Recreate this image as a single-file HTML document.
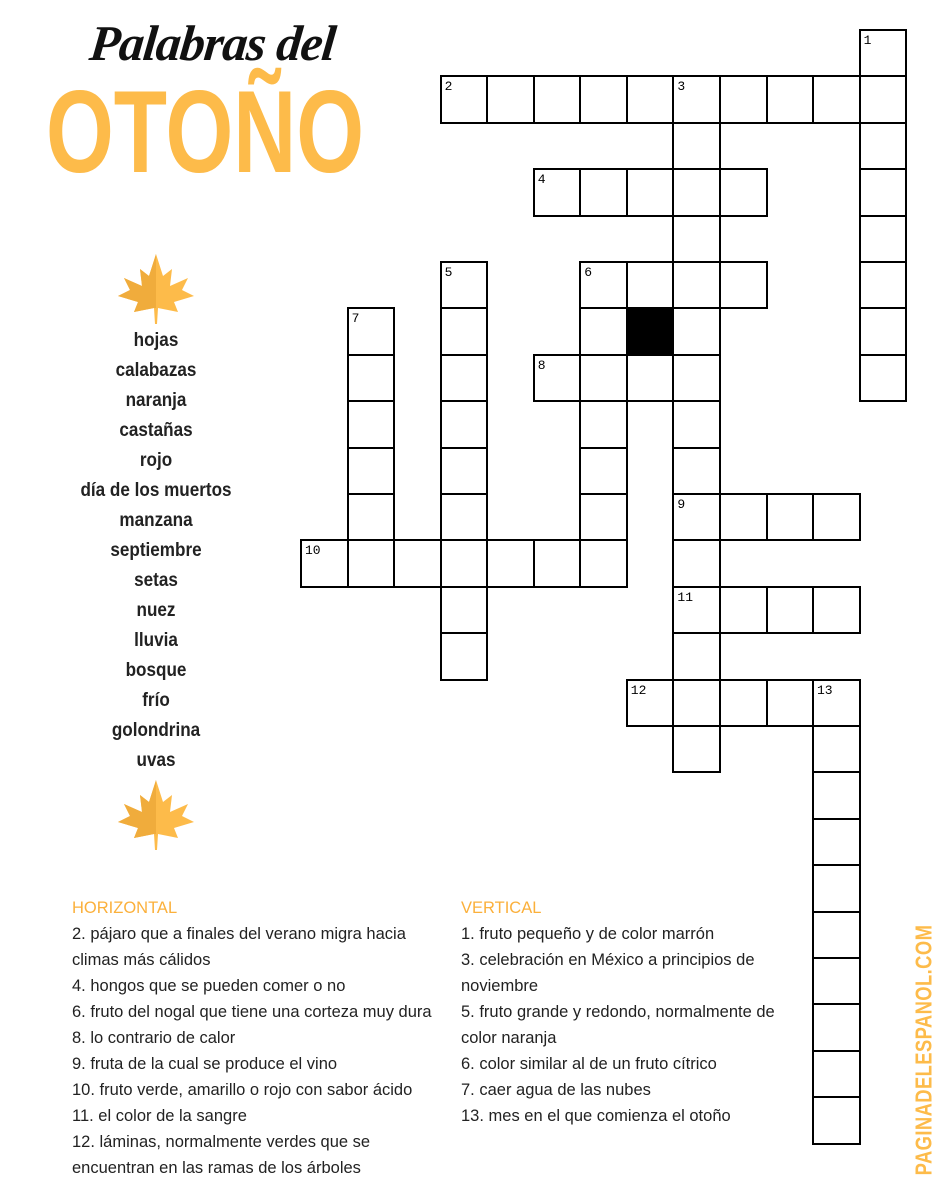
<!DOCTYPE html>
<html><head><meta charset="utf-8"><style>
body{margin:0;width:940px;height:1200px;background:#fff;position:relative;overflow:hidden;font-family:"Liberation Sans",sans-serif}
.c{position:absolute;box-sizing:border-box;width:48.6px;height:48.4px;border:2px solid #000;background:#fff}
.c span{position:absolute;left:3px;top:2px;font-family:"Liberation Mono",monospace;font-size:13px;color:#000}
.b{background:#000}
#title{position:absolute;left:90px;top:14px;font-family:"Liberation Serif",serif;font-style:italic;font-weight:bold;font-size:50px;letter-spacing:-1px;color:#111;transform:skewX(-6deg)}
#oto{position:absolute;left:46px;top:68px;font-weight:bold;font-size:117px;color:#fdbb4a;transform:scaleX(0.745);transform-origin:0 0;white-space:nowrap;line-height:1.1}
#words{position:absolute;left:56px;width:200px;top:326px;text-align:center;font-weight:bold;font-size:19px;line-height:30px;color:#222;transform:scaleX(0.9)}
.clues{position:absolute;top:895px;font-size:16.5px;line-height:26px;color:#222}
.h{color:#fbb03b}
#url{position:absolute;left:924px;top:1050px;transform:translate(-50%,-50%) rotate(-90deg) scaleX(0.8);font-weight:bold;font-size:23px;color:#fdbb4a;white-space:nowrap;letter-spacing:0.5px}
</style></head><body>
<div id="title">Palabras del</div>
<div id="oto">OTOÑO</div>
<svg style="position:absolute;left:116px;top:252px" width="80" height="72" viewBox="0 0 80 72">
<path d="M40 2 L47 24 L56 17 L54 34 L72 26 L66 38 L78 44 L58 50 L62 60 L42 56 L41 72 L39 72 L38 56 L18 60 L22 50 L2 44 L14 38 L8 26 L26 34 L24 17 L33 24 Z" fill="#fdbb4a"/>
<path d="M40 2 L33 24 L24 17 L26 34 L8 26 L14 38 L2 44 L22 50 L18 60 L38 56 L40 56 Z" fill="#f0ac3c"/>
</svg>
<svg style="position:absolute;left:116px;top:778px" width="80" height="72" viewBox="0 0 80 72">
<path d="M40 2 L47 24 L56 17 L54 34 L72 26 L66 38 L78 44 L58 50 L62 60 L42 56 L41 72 L39 72 L38 56 L18 60 L22 50 L2 44 L14 38 L8 26 L26 34 L24 17 L33 24 Z" fill="#fdbb4a"/>
<path d="M40 2 L33 24 L24 17 L26 34 L8 26 L14 38 L2 44 L22 50 L18 60 L38 56 L40 56 Z" fill="#f0ac3c"/>
</svg>
<div id="words">hojas<br>calabazas<br>naranja<br>castañas<br>rojo<br>día de los muertos<br>manzana<br>septiembre<br>setas<br>nuez<br>lluvia<br>bosque<br>frío<br>golondrina<br>uvas</div>
<div class="clues" style="left:72px"><span class="h">HORIZONTAL</span><br>2. pájaro que a finales del verano migra hacia<br>climas más cálidos<br>4. hongos que se pueden comer o no<br>6. fruto del nogal que tiene una corteza muy dura<br>8. lo contrario de calor<br>9. fruta de la cual se produce el vino<br>10. fruto verde, amarillo o rojo con sabor ácido<br>11. el color de la sangre<br>12. láminas, normalmente verdes que se<br>encuentran en las ramas de los árboles</div>
<div class="clues" style="left:461px"><span class="h">VERTICAL</span><br>1. fruto pequeño y de color marrón<br>3. celebración en México a principios de<br>noviembre<br>5. fruto grande y redondo, normalmente de<br>color naranja<br>6. color similar al de un fruto cítrico<br>7. caer agua de las nubes<br>13. mes en el que comienza el otoño</div>
<div id="url">PAGINADELESPANOL.COM</div>
<div id="grid"></div>
<script>
var cells={};
function add(c,r){cells[c+','+r]=1}
function ac(c,r,n){for(var i=0;i<n;i++)add(c+i,r)}
function dn(c,r,n){for(var i=0;i<n;i++)add(c,r+i)}
dn(12,0,8);ac(3,1,10);dn(8,1,15);ac(5,3,5);dn(3,5,9);ac(6,5,4);dn(6,5,7);dn(1,6,6);ac(5,7,4);ac(8,10,4);ac(0,11,7);ac(8,12,4);ac(7,14,5);dn(11,14,10);add(7,6);
var N={'12,0':1,'3,1':2,'8,1':3,'5,3':4,'3,5':5,'6,5':6,'1,6':7,'5,7':8,'8,10':9,'0,11':10,'8,12':11,'7,14':12,'11,14':13};
var h='';
for(var k in cells){var p=k.split(',');var c=+p[0],r=+p[1];
var x=300+c*46.55,y=29+r*46.4;
h+='<div class="c'+(k=='7,6'?' b':'')+'" style="left:'+x.toFixed(1)+'px;top:'+y.toFixed(1)+'px">'+(N[k]?'<span>'+N[k]+'</span>':'')+'</div>';}
document.getElementById('grid').innerHTML=h;
</script>
</body></html>
